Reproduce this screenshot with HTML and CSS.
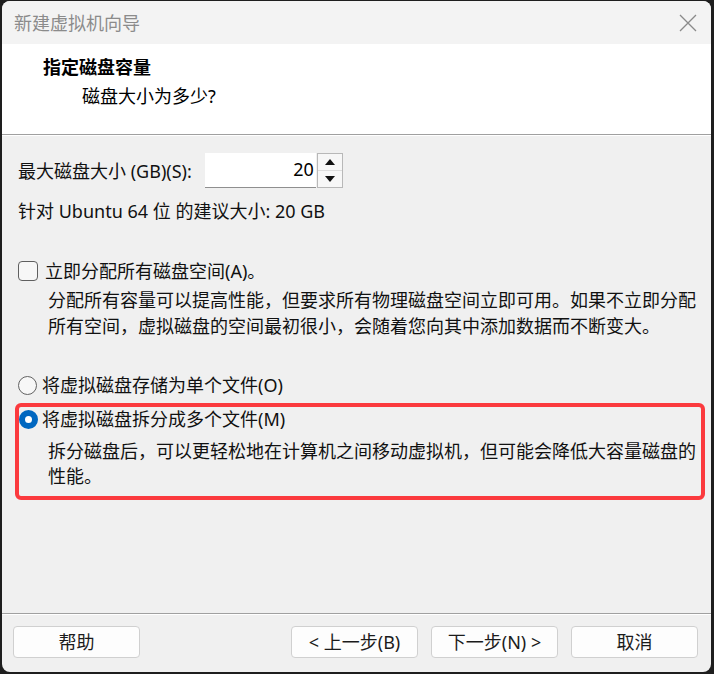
FILE: index.html
```html
<!DOCTYPE html>
<html lang="zh-CN">
<head>
<meta charset="utf-8">
<title>新建虚拟机向导</title>
<link rel="stylesheet" href="styles.css">
</head>
<body>
<div class="window">
  <div class="titlebar">
    <span class="title">新建虚拟机向导</span>
    <svg class="close" width="18" height="18" viewBox="0 0 18 18"><path d="M1 1L17 17M17 1L1 17" stroke="#8a8a8a" stroke-width="1.3" fill="none"/></svg>
  </div>
  <div class="header">
    <div class="heading">指定磁盘容量</div>
    <div class="subheading">磁盘大小为多少?</div>
  </div>
  <div class="content">
    <div class="size-row">
      <span class="label">最大磁盘大小 (GB)(S):</span>
      <div class="spin">
        <div class="spin-input">20</div>
        <div class="spin-buttons">
          <div class="spin-btn"><svg width="10" height="6" viewBox="0 0 10 6"><path d="M0 6L5 0L10 6Z" fill="#111"/></svg></div>
          <div class="spin-btn"><svg width="10" height="6" viewBox="0 0 10 6"><path d="M0 0L5 6L10 0Z" fill="#111"/></svg></div>
        </div>
      </div>
    </div>
    <div class="recommend">针对 Ubuntu 64 位 的建议大小: 20 GB</div>
    <div class="option check-row">
      <span class="checkbox"></span>
      <span>立即分配所有磁盘空间(A)。</span>
    </div>
    <p class="desc">分配所有容量可以提高性能，但要求所有物理磁盘空间立即可用。如果不立即分配<br>所有空间，虚拟磁盘的空间最初很小，会随着您向其中添加数据而不断变大。</p>
    <div class="option radio-row first-radio">
      <span class="radio"></span>
      <span>将虚拟磁盘存储为单个文件(O)</span>
    </div>
    <div class="highlight">
      <div class="option radio-row">
        <span class="radio checked"></span>
        <span>将虚拟磁盘拆分成多个文件(M)</span>
      </div>
      <p class="desc desc2">拆分磁盘后，可以更轻松地在计算机之间移动虚拟机，但可能会降低大容量磁盘的<br>性能。</p>
    </div>
  </div>
  <div class="footer">
    <button class="btn">帮助</button>
    <div class="spacer"></div>
    <button class="btn">&lt; 上一步(B)</button>
    <button class="btn">下一步(N) &gt;</button>
    <button class="btn">取消</button>
  </div>
</div>
</body>
</html>
```

FILE: styles.css
```css
* { box-sizing: border-box; }
html, body {
  margin: 0;
  padding: 0;
  background: #1e1e1e;
  width: 714px;
  height: 674px;
  overflow: hidden;
}
body {
  font-family: "Segoe UI", "Noto Sans", "Noto Sans CJK SC", sans-serif;
  font-size: 18px;
  color: #111;
}
.window {
  margin: 1px 0 0 2px;
  width: 709px;
  height: 671px;
  border-radius: 8px;
  overflow: hidden;
  background: #f0f0f0;
  display: flex;
  flex-direction: column;
}
.titlebar {
  height: 43px;
  background: #f3f3f3;
  display: flex;
  align-items: center;
  justify-content: space-between;
  padding: 0 14px 0 12px;
}
.title {
  color: #8b8b8b;
  font-size: 18px;
  line-height: 24px;
}
.close { display: block; }
.header {
  background: #fff;
  height: 91px;
  padding-top: 11px;
  border-bottom: 1px solid #a0a0a0;
  box-shadow: 0 1px 0 #ffffff;
}
.heading {
  font-weight: bold;
  line-height: 24px;
  padding-left: 41px;
  color: #000;
}
.subheading {
  line-height: 24px;
  margin-top: 5px;
  padding-left: 80px;
  color: #000;
}
.content {
  flex: 1;
  padding: 18px 0 0 16px;
}
.size-row {
  display: flex;
  align-items: center;
  height: 35px;
}
.label { line-height: 24px; }
.spin {
  display: flex;
  margin-left: 13px;
  height: 35px;
}
.spin-input {
  width: 111px;
  height: 35px;
  background: #fff;
  border-bottom: 1px solid #8f8f8f;
  text-align: right;
  padding-right: 2px;
  line-height: 32px;
  color: #000;
}
.spin-buttons {
  width: 26px;
  height: 35px;
  margin-left: 1px;
  border: 1px solid #b8b8b8;
  display: flex;
  flex-direction: column;
}
.spin-btn {
  flex: 1;
  display: flex;
  align-items: center;
  justify-content: center;
  background: #f7f7f7;
}
.spin-btn + .spin-btn { border-top: 1px solid #dcdcdc; }
.spin-btn svg { display: block; }
.recommend {
  line-height: 24px;
  margin-top: 11px;
}
.option {
  display: flex;
  align-items: center;
  line-height: 24px;
}
.check-row {
  margin-top: 36px;
}
.checkbox {
  width: 20px;
  height: 20px;
  border: 1px solid #5f5f5f;
  border-radius: 4px;
  background: #f7f7f7;
  margin-right: 7px;
}
.desc {
  margin: 4px 0 0 30px;
  line-height: 26px;
}
.first-radio {
  margin-top: 34px;
}
.radio {
  width: 19px;
  height: 19px;
  border: 1px solid #626262;
  border-radius: 50%;
  background: #f7f7f7;
  margin-right: 5px;
}
.radio.checked {
  border: 6px solid #0067c0;
  background: #fff;
  margin-right: 4px;
}
.highlight {
  margin: 6px 0 0 -3px;
  width: 690px;
  height: 97px;
  border: 4px solid #fb3a3e;
  border-radius: 6px;
  padding: 0;
}
.desc2 {
  margin: 8px 0 0 29px;
  line-height: 25px;
}
.footer {
  height: 59px;
  border-top: 1px solid #a0a0a0;
  box-shadow: inset 0 1px 0 #ffffff;
  display: flex;
  align-items: flex-start;
  padding: 12px 13px 0 11px;
  gap: 13px;
}
.spacer { flex: 1; }
.btn {
  width: 127px;
  height: 32px;
  background: #fdfdfd;
  border: 1px solid #d0d0d0;
  border-radius: 4px;
  font-family: inherit;
  font-size: 18px;
  color: #1b1b1b;
  padding: 0;
  line-height: 28px;
}
```
